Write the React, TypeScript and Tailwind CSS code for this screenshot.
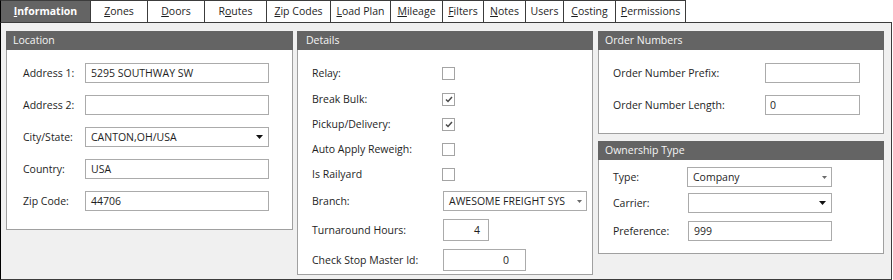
import type { ReactNode } from "react";

const tabs: { label: ReactNode; width: string; active?: boolean }[] = [
  { label: <><u>I</u>nformation</>, width: "w-[91px]", active: true },
  { label: <><u>Z</u>ones</>, width: "w-[57px]" },
  { label: <><u>D</u>oors</>, width: "w-[57px]" },
  { label: <>R<u>o</u>utes</>, width: "w-[62px]" },
  { label: <><u>Z</u>ip Codes</>, width: "w-[64px]" },
  { label: <><u>L</u>oad Plan</>, width: "w-[60px]" },
  { label: <><u>M</u>ileage</>, width: "w-[52px]" },
  { label: <><u>F</u>ilters</>, width: "w-[41px]" },
  { label: <><u>N</u>otes</>, width: "w-[42px]" },
  { label: <>Users</>, width: "w-[38px]" },
  { label: <><u>C</u>osting</>, width: "w-[52px]" },
  { label: <><u>P</u>ermissions</>, width: "w-[70px]" },
];

function Panel({
  title,
  className,
  titleClass = "pl-[7px]",
  bodyClass,
  children,
}: {
  title: string;
  className: string;
  titleClass?: string;
  bodyClass: string;
  children: ReactNode;
}) {
  return (
    <div className={`flex flex-col ${className}`}>
      <div className={`flex h-[19px] shrink-0 items-center bg-[#646464] text-[#f4f4f4] ${titleClass}`}>
        {title}
      </div>
      <div className={`flex-1 border-x border-b border-[#a0a0a0] bg-white ${bodyClass}`}>
        {children}
      </div>
    </div>
  );
}

function BigArrow() {
  return (
    <svg width="7" height="4" viewBox="0 0 7 4" className="shrink-0">
      <polygon points="0,0 7,0 3.5,4" fill="#111" />
    </svg>
  );
}

function SmallArrow() {
  return (
    <svg width="5" height="3" viewBox="0 0 5 3" className="shrink-0">
      <polygon points="0,0 5,0 2.5,3" fill="#6a6a6a" />
    </svg>
  );
}

function TextBox({ value, className }: { value?: string; className: string }) {
  return (
    <div className={`flex h-[20px] items-center border border-[#ababab] bg-white px-[4px] ${className}`}>
      {value}
    </div>
  );
}

function Combo({
  value,
  className,
  small,
}: {
  value?: string;
  className: string;
  small?: boolean;
}) {
  return (
    <div
      className={`flex h-[20px] items-center justify-between border border-[#ababab] bg-white pl-[5px] ${
        small ? "pr-[4px]" : "pr-[5px]"
      } ${className}`}
    >
      <span>{value}</span>
      {small ? <SmallArrow /> : <BigArrow />}
    </div>
  );
}

function CheckBox({ checked }: { checked?: boolean }) {
  return (
    <div className="flex h-[13px] w-[13px] items-center justify-center border border-[#a4a4a4] bg-white">
      {checked ? (
        <svg width="8" height="7" viewBox="0 0 8 7">
          <polyline points="1,3.5 3,5.5 7,1" fill="none" stroke="#4a4a4a" strokeWidth="1.5" />
        </svg>
      ) : null}
    </div>
  );
}

export default function App() {
  return (
    <div className="h-[280px] w-[893px] bg-white font-['Open_Sans',sans-serif] text-[10.5px] leading-none text-[#1e1e1e]">
      {/* tab strip */}
      <div className="flex h-[22px]">
        {tabs.map((tab, i) => (
          <div
            key={i}
            className={`flex h-[22px] items-center justify-center border-r border-t border-[#3c3c3c] ${tab.width} ${
              tab.active ? "border-l border-l-black bg-[#646464] font-bold text-white" : "bg-white"
            }`}
          >
            <span>{tab.label}</span>
          </div>
        ))}
      </div>

      {/* body */}
      <div className="flex h-[258px] w-[892px] gap-[4px] border border-[#3c3c3c] border-l-black bg-[#f0f0f0] pl-[5px] pt-[8px]">
        <Panel
          title="Location"
          className="h-[199px] w-[287px]"
          bodyClass="flex flex-col gap-[12px] pl-[16px] pt-[13px]"
        >
          {[
            ["Address 1:", "5295 SOUTHWAY SW"],
            ["Address 2:", ""],
            ["City/State:", "CANTON,OH/USA"],
            ["Country:", "USA"],
            ["Zip Code:", "44706"],
          ].map(([label, value]) => (
            <div key={label} className="flex h-[20px] items-center">
              <span className="w-[62px]">{label}</span>
              {label === "City/State:" ? (
                <Combo value={value} className="w-[184px]" />
              ) : (
                <TextBox value={value} className="w-[184px] pl-[5px]" />
              )}
            </div>
          ))}
        </Panel>

        <Panel
          title="Details"
          className="h-[244px] w-[296px]"
          titleClass="pl-[9px]"
          bodyClass="flex flex-col pl-[14px] pt-[9px]"
        >
          {[
            ["Relay:", false],
            ["Break Bulk:", true],
            ["Pickup/Delivery:", true],
            ["Auto Apply Reweigh:", false],
            ["Is Railyard", false],
          ].map(([label, checked], i) => (
            <div key={label as string} className={`flex items-center ${i === 0 ? "h-[28px]" : "h-[25px]"}`}>
              <span className="w-[130px]">{label}</span>
              <CheckBox checked={checked as boolean} />
            </div>
          ))}
          <div className="mt-[4px] flex h-[20px] items-center">
            <span className="w-[131px]">Branch:</span>
            <Combo value="AWESOME FREIGHT SYS" small className="w-[144px]" />
          </div>
          <div className="mt-[8px] flex h-[22px] items-center">
            <span className="w-[131px]">Turnaround Hours:</span>
            <div className="flex h-[22px] w-[46px] items-center justify-end border border-[#ababab] bg-white pr-[8px]">
              4
            </div>
          </div>
          <div className="mt-[8px] flex h-[22px] items-center">
            <span className="w-[131px]">Check Stop Master Id:</span>
            <div className="flex h-[22px] w-[83px] items-center justify-end border border-[#ababab] bg-white pr-[16px]">
              0
            </div>
          </div>
        </Panel>

        <div className="ml-[1px] flex flex-col gap-[7px]">
          <Panel
            title="Order Numbers"
            className="h-[103px] w-[286px]"
            bodyClass="flex flex-col gap-[12px] pl-[14px] pt-[13px]"
          >
            <div className="flex h-[20px] items-center">
              <span className="w-[152px]">Order Number Prefix:</span>
              <TextBox className="w-[95px]" />
            </div>
            <div className="flex h-[20px] items-center">
              <span className="w-[152px]">Order Number Length:</span>
              <TextBox value="0" className="w-[95px]" />
            </div>
          </Panel>

          <Panel
            title="Ownership Type"
            className="h-[113px] w-[286px]"
            bodyClass="flex flex-col pl-[14px] pt-[7px]"
          >
            <div className="flex h-[20px] items-center">
              <span className="w-[74px]">Type:</span>
              <Combo value="Company" small className="w-[145px]" />
            </div>
            <div className="mt-[6px] flex h-[20px] items-center">
              <span className="w-[75px]">Carrier:</span>
              <Combo className="w-[144px]" />
            </div>
            <div className="mt-[8px] flex h-[20px] items-center">
              <span className="w-[75px]">Preference:</span>
              <TextBox value="999" className="w-[144px] pl-[5px]" />
            </div>
          </Panel>
        </div>
      </div>
    </div>
  );
}
